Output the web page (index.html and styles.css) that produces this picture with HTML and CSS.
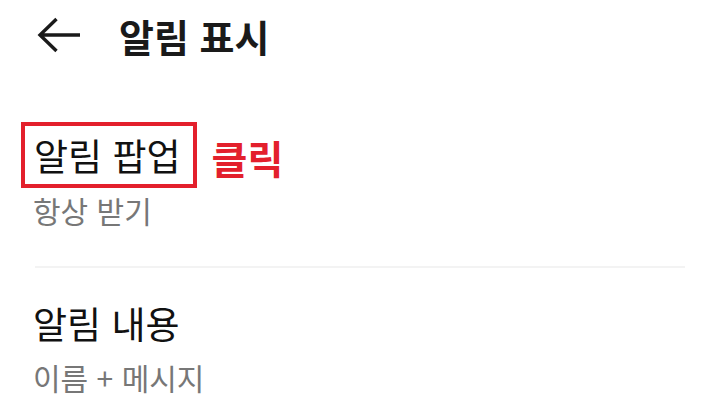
FILE: index.html
```html
<!DOCTYPE html>
<html lang="ko">
<head>
<meta charset="utf-8">
<link rel="stylesheet" href="styles.css">
</head>
<body>
<div class="screen">
  <header class="appbar">
    <svg class="back" width="44" height="38" viewBox="0 0 44 38">
      <path d="M43 19H4M19.5 3L3 19l16.5 16" fill="none" stroke="#1a1a1a" stroke-width="3.4" stroke-linecap="butt" stroke-linejoin="miter"/>
    </svg>
    <h1 class="title">알림 표시</h1>
  </header>

  <section class="item first">
    <div class="item-head">
      <span class="boxed">알림 팝업</span>
      <span class="note">클릭</span>
    </div>
    <div class="sub">항상 받기</div>
  </section>

  <div class="divider"></div>

  <section class="item second">
    <div class="item-title">알림 내용</div>
    <div class="sub">이름 + 메시지</div>
  </section>
</div>
</body>
</html>
```

FILE: styles.css
```css
html, body {
  margin: 0;
  padding: 0;
  background: #ffffff;
}
body {
  font-family: "Noto Sans CJK KR", "Noto Sans", sans-serif;
  color: #1a1a1a;
}
.screen {
  width: 720px;
  height: 399px;
  display: flex;
  flex-direction: column;
}
.appbar {
  display: flex;
  align-items: center;
  height: 70px;
  padding-left: 37px;
  gap: 38px;
}
.back {
  display: block;
  margin-top: -1px;
}
.title {
  margin: 0;
  font-size: 38px;
  font-weight: 700;
  line-height: 1;
  margin-top: 2px;
}
.item {
  display: flex;
  flex-direction: column;
  padding-left: 21px;
}
.first {
  margin-top: 52px;
}
.item-head {
  display: flex;
  align-items: center;
  gap: 15px;
}
.boxed {
  border: 4px solid #e3202c;
  padding: 4px 12px 4px 9px;
  font-size: 37px;
  line-height: 50px;
  color: #111;
}
.note {
  color: #e3202c;
  font-size: 39px;
  font-weight: 700;
  line-height: 1;
  margin-top: 4px;
}
.sub {
  font-size: 30px;
  color: #777777;
  line-height: 36px;
  padding-left: 12px;
}
.first .sub {
  margin-top: 4px;
}
.divider {
  height: 2px;
  background: #f3f3f3;
  margin: 38px 35px 0 35px;
}
.second {
  margin-top: 30px;
}
.item-title {
  font-size: 37px;
  line-height: 50px;
  padding-left: 12px;
  color: #111;
}
.second .sub {
  margin-top: 11px;
}
```
